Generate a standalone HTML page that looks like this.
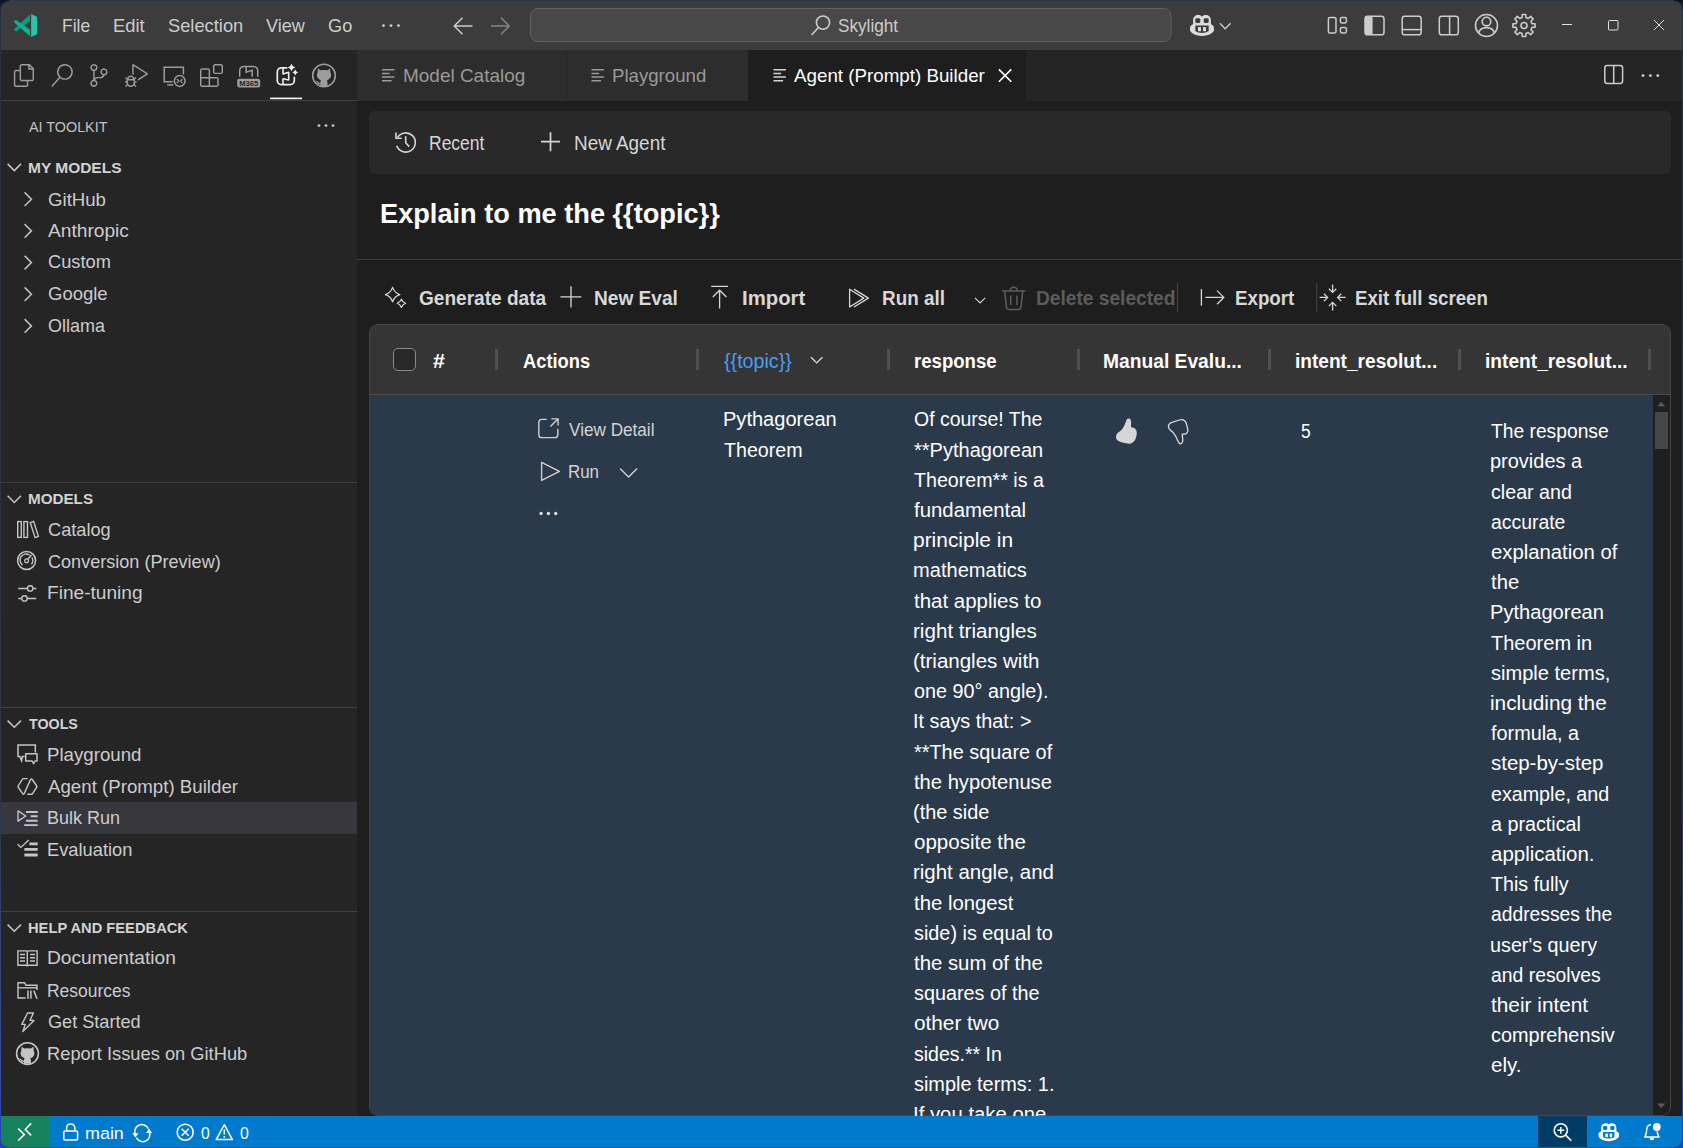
<!DOCTYPE html>
<html><head><meta charset="utf-8"><title>Agent (Prompt) Builder</title>
<style>
html,body{margin:0;padding:0;background:#1e1e1e;overflow:hidden}
body{width:1683px;height:1148px;position:relative;font-family:"Liberation Sans",sans-serif;}
#root{position:absolute;left:0;top:0;width:1683px;height:1148px;overflow:hidden}
.t{position:absolute;white-space:pre;transform-origin:0 0;font-family:"Liberation Sans",sans-serif}
svg{position:absolute;overflow:visible}
</style></head><body><div id="root">
<div style="position:absolute;left:0;top:0;width:1683px;height:1148px;background:linear-gradient(180deg,#0a1222 0px,#263040 12px,#2d3748 70%,#35509a 93%,#2440b4 100%)"></div>
<div style="position:absolute;left:9px;top:0;width:1665px;height:1px;background:#2b3644"></div>
<div style="position:absolute;left:9px;top:1147px;width:1665px;height:1px;background:#3c4b9a"></div>
<div style="position:absolute;left:1px;top:1px;width:1681px;height:49px;background:#3c3c3c;border-radius:8px 8px 0 0"></div>
<div style="position:absolute;left:1px;top:50px;width:356px;height:1066px;background:#252526;"></div>
<div style="position:absolute;left:1px;top:100px;width:356px;height:1px;background:#414141;"></div>
<div style="position:absolute;left:357px;top:50px;width:1325px;height:51px;background:#252526;"></div>
<div style="position:absolute;left:357px;top:50px;width:209px;height:51px;background:#2d2d2d;"></div>
<div style="position:absolute;left:567px;top:50px;width:181px;height:51px;background:#2d2d2d;"></div>
<div style="position:absolute;left:748px;top:50px;width:278px;height:51px;background:#1e1e1e;"></div>
<div style="position:absolute;left:357px;top:101px;width:1325px;height:1015px;background:#1e1e1e;"></div>
<div style="position:absolute;left:369px;top:111px;width:1302px;height:63px;background:#292929;border-radius:6px"></div>
<div style="position:absolute;left:357px;top:259px;width:1325px;height:1px;background:#3a3a3a;"></div>
<div style="position:absolute;left:369px;top:324px;width:1302px;height:791.5px;box-sizing:border-box;border:1px solid #454545;border-radius:9px;background:#353535;overflow:hidden"><div style="position:absolute;left:0;top:69px;width:1300px;height:1px;background:#4a4a4a"></div><div style="position:absolute;left:0;top:70px;width:1283px;height:740px;background:#2a3a4a"></div><div style="position:absolute;left:1283px;top:70px;width:17px;height:740px;background:#1f1f1f"></div><div style="position:absolute;left:1285px;top:87px;width:13px;height:37px;background:#474747"></div></div>
<div style="position:absolute;left:495.25px;top:349px;width:3px;height:21px;background:#505050;"></div>
<div style="position:absolute;left:696.25px;top:349px;width:3px;height:21px;background:#505050;"></div>
<div style="position:absolute;left:886.5px;top:349px;width:3px;height:21px;background:#505050;"></div>
<div style="position:absolute;left:1077px;top:349px;width:3px;height:21px;background:#505050;"></div>
<div style="position:absolute;left:1267.5px;top:349px;width:3px;height:21px;background:#505050;"></div>
<div style="position:absolute;left:1458px;top:349px;width:3px;height:21px;background:#505050;"></div>
<div style="position:absolute;left:1648.3px;top:349px;width:3px;height:21px;background:#505050;"></div>
<div style="position:absolute;left:393px;top:348px;width:21px;height:21px;border:1px solid #8a8a8a;border-radius:5px;background:#292929"></div>
<div style="position:absolute;left:1px;top:1116px;width:1681px;height:31px;background:#007acc;border-radius:0 0 8px 8px"></div>
<div style="position:absolute;left:1px;top:1116px;width:48px;height:31px;background:#16825d;border-radius:0 0 0 8px"></div>
<div style="position:absolute;left:1538px;top:1116px;width:49px;height:31px;background:#003c66;"></div>
<div style="position:absolute;left:1px;top:482px;width:356px;height:1px;background:#3f3f3f;"></div>
<div style="position:absolute;left:1px;top:707px;width:356px;height:1px;background:#3f3f3f;"></div>
<div style="position:absolute;left:1px;top:911px;width:356px;height:1px;background:#3f3f3f;"></div>
<div style="position:absolute;left:1px;top:802px;width:356px;height:32px;background:#37373d;"></div>
<svg style="left:0;top:0" width="1683" height="1148" viewBox="0 0 1683 1148"><path d="M30 14.6 L30 21.1 L16.6 31.3 L14.4 30.3 Q13.6 29.6 14.4 28.8 Z" fill="#009f7e"/><path d="M16 19.9 L30 29.7 L30 36.2 L14.3 22.4 Q13.6 21.6 14.4 20.8 Z" fill="#00b894"/><path d="M31.1 14.1 L36.4 16.5 Q37.2 16.9 37.2 17.8 V33.3 Q37.2 34.2 36.4 34.6 L31.1 37 Z" fill="#27c4a9"/></svg>
<svg style="left:0;top:0" width="1683" height="1148" viewBox="0 0 1683 1148"><circle cx="383.5" cy="25.6" r="1.45" fill="#cccccc"/><circle cx="391" cy="25.6" r="1.45" fill="#cccccc"/><circle cx="398.5" cy="25.6" r="1.45" fill="#cccccc"/><path d="M472.5 26 H454.5 M462.5 17.8 L454.3 26 L462.5 34.2" fill="none" stroke="#cccccc" stroke-width="1.5" /><path d="M491 26 H509 M501 17.8 L509.2 26 L501 34.2" fill="none" stroke="#858585" stroke-width="1.5" /><rect x="530.5" y="8.5" width="640.5" height="33" rx="7.5" fill="#484848" stroke="#626262" stroke-width="1"/><path d="M818.2 27.8 L811.6 35" fill="none" stroke="#cccccc" stroke-width="1.6" /><circle cx="823" cy="22.6" r="6.6" fill="none" stroke="#cccccc" stroke-width="1.6"/><g transform="translate(1190 15) scale(1.0)"><path d="M0 13 C0 11.2 1.3 10 3.1 9.3 V5.6 C3.1 2 5.2 0.1 8.4 0.1 C10 0.1 11.3 0.7 12 1.6 C12.7 0.7 14 0.1 15.6 0.1 C18.8 0.1 20.9 2 20.9 5.6 V9.3 C22.7 10 24 11.2 24 13 V15 C24 16.4 22.8 17.4 21.6 18.2 C19 19.9 15.4 21 12 21 C8.6 21 5 19.9 2.4 18.2 C1.2 17.4 0 16.4 0 15 Z" fill="#dcdcdc"/><rect x="5.3" y="3.2" width="5" height="4.7" rx="1.3" fill="#3c3c3c"/><rect x="13.7" y="3.2" width="5" height="4.7" rx="1.3" fill="#3c3c3c"/><path d="M5.3 10.4 H18.7 V16 C17 17.2 14.7 17.9 12 17.9 C9.3 17.9 7 17.2 5.3 16 Z" fill="#3c3c3c"/><rect x="8" y="12" width="3" height="4.3" rx="0.6" fill="#dcdcdc"/><rect x="13" y="12" width="3" height="4.3" rx="0.6" fill="#dcdcdc"/></g><path d="M1219.8 23.3 L1225.2 28.7 L1230.6 23.3" fill="none" stroke="#cccccc" stroke-width="1.4" /><rect x="1328.4" y="17.4" width="7.6" height="15.6" rx="1.6" fill="none" stroke="#cccccc" stroke-width="1.5"/><rect x="1340.4" y="17.4" width="6" height="5.6" rx="1.4" fill="none" stroke="#cccccc" stroke-width="1.5"/><rect x="1340.4" y="27.4" width="6" height="5.6" rx="1.4" fill="none" stroke="#cccccc" stroke-width="1.5"/><rect x="1365" y="16.2" width="19" height="18.6" rx="2.6" fill="none" stroke="#cccccc" stroke-width="1.5"/><path d="M1365 18.5 a2.3 2.3 0 0 1 2.3 -2.3 H1372.6 V34.8 H1367.3 a2.3 2.3 0 0 1 -2.3 -2.3 Z" fill="#cccccc"/><rect x="1402.2" y="16.2" width="19" height="18.6" rx="2.6" fill="none" stroke="#cccccc" stroke-width="1.5"/><path d="M1402.2 29.6 H1421.2" fill="none" stroke="#cccccc" stroke-width="1.5" /><rect x="1439.3" y="16.2" width="19" height="18.6" rx="2.6" fill="none" stroke="#cccccc" stroke-width="1.5"/><path d="M1449.6 16.2 V34.8" fill="none" stroke="#cccccc" stroke-width="1.5" /><circle cx="1486.5" cy="25.5" r="11" fill="none" stroke="#cccccc" stroke-width="1.6"/><circle cx="1486.5" cy="21.6" r="4.3" fill="none" stroke="#cccccc" stroke-width="1.6"/><path d="M1478.6 33 C1479.6 28.6 1483 27.6 1486.5 27.6 C1490 27.6 1493.4 28.6 1494.4 33" fill="none" stroke="#cccccc" stroke-width="1.6" /><path d="M1535.06 23.75 L1535.06 27.25 L1531.97 27.41 L1530.99 29.78 L1533.06 32.08 L1530.58 34.56 L1528.28 32.49 L1525.91 33.47 L1525.75 36.56 L1522.25 36.56 L1522.09 33.47 L1519.72 32.49 L1517.42 34.56 L1514.94 32.08 L1517.01 29.78 L1516.03 27.41 L1512.94 27.25 L1512.94 23.75 L1516.03 23.59 L1517.01 21.22 L1514.94 18.92 L1517.42 16.44 L1519.72 18.51 L1522.09 17.53 L1522.25 14.44 L1525.75 14.44 L1525.91 17.53 L1528.28 18.51 L1530.58 16.44 L1533.06 18.92 L1530.99 21.22 L1531.97 23.59 Z" fill="none" stroke="#cccccc" stroke-width="1.6" stroke-linejoin="round"/><circle cx="1524" cy="25.5" r="3.02" fill="none" stroke="#cccccc" stroke-width="1.6"/><path d="M1562 24.5 H1572" fill="none" stroke="#e0e0e0" stroke-width="1" /><rect x="1608.5" y="20.5" width="9.5" height="9.5" rx="1" fill="none" stroke="#e0e0e0" stroke-width="1"/><path d="M1654 20 L1664 30 M1664 20 L1654 30" fill="none" stroke="#e4e4e4" stroke-width="0.95" /><path d="M382 69.7 h12.4 M382 73.4 h7.6 M382 77.10000000000001 h12.4 M382 80.8 h9.6" fill="none" stroke="#9a9a9a" stroke-width="1.5" /><path d="M591.5 69.7 h12.4 M591.5 73.4 h7.6 M591.5 77.10000000000001 h12.4 M591.5 80.8 h9.6" fill="none" stroke="#9a9a9a" stroke-width="1.5" /><path d="M773.5 69.7 h12.4 M773.5 73.4 h7.6 M773.5 77.10000000000001 h12.4 M773.5 80.8 h9.6" fill="none" stroke="#d4d4d4" stroke-width="1.5" /><path d="M998.9 69.4 L1011.3 81.8 M1011.3 69.4 L998.9 81.8" fill="none" stroke="#ffffff" stroke-width="1.6" /><rect x="1604.8" y="65.5" width="17.8" height="18" rx="2.4" fill="none" stroke="#cccccc" stroke-width="1.5"/><path d="M1613.7 65.5 V83.5" fill="none" stroke="#cccccc" stroke-width="1.5" /><circle cx="1643" cy="75.6" r="1.45" fill="#cccccc"/><circle cx="1650.4" cy="75.6" r="1.45" fill="#cccccc"/><circle cx="1657.8" cy="75.6" r="1.45" fill="#cccccc"/></svg>
<svg style="left:0;top:0" width="1683" height="1148" viewBox="0 0 1683 1148"><g transform="translate(12.9 64) scale(0.9583333333333334)"><path d="M17.5 0h-9L7 1.5V6H2.5L1 7.5v15.07L2.5 24h12.07L16 22.57V18h4.7l1.3-1.43V4.5L17.5 0zm0 2.12l2.38 2.38H17.5V2.12zm-3 20.38h-12v-15H7v9.07L8.5 18h6v4.5zm6-6h-12v-15H16V6h4.5v10.5z" fill="#9d9d9d"/></g><g transform="translate(50.3 64) scale(0.9583333333333334)"><path d="M15.25 0a8.25 8.25 0 0 0-6.18 13.72L1 22.88l1.12 1 8.05-9.12A8.251 8.251 0 1 0 15.25.01V0zm0 15a6.75 6.75 0 1 1 0-13.5 6.75 6.75 0 0 1 0 13.5z" fill="#9d9d9d"/></g><g transform="translate(87.4 64) scale(0.9583333333333334)"><path d="M21.007 8.222A3.738 3.738 0 0 0 15.045 5.2a3.737 3.737 0 0 0 1.156 6.583 2.988 2.988 0 0 1-2.668 1.67h-2.99a4.456 4.456 0 0 0-2.989 1.165V7.4a3.737 3.737 0 1 0-1.494 0v9.117a3.776 3.776 0 1 0 1.816.099 2.99 2.99 0 0 1 2.668-1.667h2.99a4.484 4.484 0 0 0 4.223-3.039 3.736 3.736 0 0 0 3.25-3.687zM4.565 3.738a2.242 2.242 0 1 1 4.484 0 2.242 2.242 0 0 1-4.484 0zm4.484 16.441a2.242 2.242 0 1 1-4.484 0 2.242 2.242 0 0 1 4.484 0zm8.221-9.715a2.242 2.242 0 1 1 0-4.485 2.242 2.242 0 0 1 0 4.485z" fill="#9d9d9d"/></g><g transform="translate(125 64) scale(0.9583333333333334)"><path d="M10.94 13.5l-1.32 1.32a3.73 3.73 0 0 0-7.24 0L1.06 13.5 0 14.56l1.72 1.72-.22.22V18H0v1.5h1.5v.08c.077.489.214.966.41 1.42L0 22.94 1.06 24l1.65-1.65A4.308 4.308 0 0 0 6 24a4.31 4.31 0 0 0 3.29-1.65L10.94 24 12 22.94 10.09 21c.198-.464.336-.951.41-1.45v-.1H12V18h-1.5v-1.5l-.22-.22L12 14.56l-1.06-1.06zM6 13.5a2.25 2.25 0 0 1 2.25 2.25h-4.5A2.25 2.25 0 0 1 6 13.5zm3 6a3.33 3.33 0 0 1-3 3 3.33 3.33 0 0 1-3-3v-2.25h6v2.25zm14.76-9.9v1.26L13.5 17.37V15.6l8.5-5.37L9 2v9.46a5.07 5.07 0 0 0-1.5-.72V.63L8.64 0l15.12 9.6z" fill="#9d9d9d"/></g><g transform="translate(200 64) scale(0.9583333333333334)"><path d="M13.5 1.5L15 0h7.5L24 1.5V9l-1.5 1.5H15L13.5 9V1.5zm1.5 0V9h7.5V1.5H15zM0 15V6l1.5-1.5H9L10.5 6v7.5H18l1.5 1.5v7.5L18 24H1.5L0 22.5V15zm9-1.5V6H1.5v7.5H9zM9 15H1.5v7.5H9V15zm1.5 7.5H18V15h-7.5v7.5z" fill="#9d9d9d"/></g><path d="M172.6 81.8 H164.2 V67.2 H183.4 V74.6" fill="none" stroke="#9d9d9d" stroke-width="1.5" /><path d="M167.2 84.9 H173.4" fill="none" stroke="#9d9d9d" stroke-width="1.5" /><circle cx="179.7" cy="81" r="5.4" fill="none" stroke="#9d9d9d" stroke-width="1.5"/><path d="M176.9 79 L178.9 81 L176.9 83 M182.5 79 L180.5 81 L182.5 83" fill="none" stroke="#9d9d9d" stroke-width="1.1" /><path d="M239.7 76.8 V70.6 a4.2 4.2 0 0 1 4.2 -4.2 H253.5 a4.2 4.2 0 0 1 4.2 4.2 V76.8" fill="none" stroke="#9d9d9d" stroke-width="1.5" /><path d="M246.1 66.4 V72.2 L252.2 70.2 V76.8" fill="none" stroke="#9d9d9d" stroke-width="1.5" /><rect x="237.2" y="78.8" width="23" height="8.6" rx="2.2" fill="#9d9d9d"/><text x="248.7" y="86" font-family="Liberation Sans" font-weight="700" font-size="7.6" text-anchor="middle" fill="#252526" textLength="19" lengthAdjust="spacingAndGlyphs">M365</text><path d="M286.6 67.9 H281.4 a4.1 4.1 0 0 0 -4.1 4.1 V80.6 a4.1 4.1 0 0 0 4.1 4.1 H290.2 a4.1 4.1 0 0 0 4.1 -4.1 V77.3" fill="none" stroke="#ececec" stroke-width="1.75" stroke-linecap="round"/><path d="M283 67.9 V74 L288.7 72.3 V80 L283 78.7 V84.7" fill="none" stroke="#ececec" stroke-width="1.6" stroke-linejoin="round"/><path d="M291.5 63.7 Q292.336 66.664 295.3 67.5 Q292.336 68.336 291.5 71.3 Q290.664 68.336 287.7 67.5 Q290.664 66.664 291.5 63.7 Z" fill="#ececec"/><path d="M295.2 69.6 Q295.83799999999997 71.862 298.09999999999997 72.5 Q295.83799999999997 73.138 295.2 75.4 Q294.562 73.138 292.3 72.5 Q294.562 71.862 295.2 69.6 Z" fill="#ececec"/><rect x="270" y="97.6" width="32" height="1.6" fill="#ffffff"/><circle cx="324" cy="75.5" r="11.3" fill="none" stroke="#9d9d9d" stroke-width="1.6"/><path d="M317.80 68.50 L320.60 70.30 Q324.00 69.50 327.40 70.30 L330.20 68.50 L330.40 72.30 Q331.60 74.50 330.80 77.10 Q329.60 79.90 327.00 80.30 Q327.80 81.50 327.60 85.90 L320.40 85.90 L320.40 84.10 Q317.60 84.50 316.40 81.90 Q316.00 81.10 315.40 80.70 Q317.40 80.50 318.00 81.90 Q318.80 83.10 320.40 82.50 Q320.40 80.90 321.00 80.30 Q318.40 79.90 317.20 77.10 Q316.40 74.50 317.60 72.30 Z" fill="#9d9d9d"/><circle cx="319" cy="125.6" r="1.45" fill="#c5c5c5"/><circle cx="326" cy="125.6" r="1.45" fill="#c5c5c5"/><circle cx="333" cy="125.6" r="1.45" fill="#c5c5c5"/><path d="M7.6 163.9 l6.7 6.7 l6.7 -6.7" fill="none" stroke="#c5c5c5" stroke-width="1.5" /><path d="M7.6 495.8 l6.7 6.7 l6.7 -6.7" fill="none" stroke="#c5c5c5" stroke-width="1.5" /><path d="M7.6 720.6 l6.7 6.7 l6.7 -6.7" fill="none" stroke="#c5c5c5" stroke-width="1.5" /><path d="M7.6 924.6 l6.7 6.7 l6.7 -6.7" fill="none" stroke="#c5c5c5" stroke-width="1.5" /><path d="M24.6 192.4 l6.8 6.8 l-6.8 6.8" fill="none" stroke="#c5c5c5" stroke-width="1.5" /><path d="M24.6 224.1 l6.8 6.8 l-6.8 6.8" fill="none" stroke="#c5c5c5" stroke-width="1.5" /><path d="M24.6 255.8 l6.8 6.8 l-6.8 6.8" fill="none" stroke="#c5c5c5" stroke-width="1.5" /><path d="M24.6 287.4 l6.8 6.8 l-6.8 6.8" fill="none" stroke="#c5c5c5" stroke-width="1.5" /><path d="M24.6 319.1 l6.8 6.8 l-6.8 6.8" fill="none" stroke="#c5c5c5" stroke-width="1.5" /><rect x="17.7" y="521.6" width="3.6" height="15.8" fill="none" stroke="#c5c5c5" stroke-width="1.4"/><rect x="23.9" y="521.6" width="3.6" height="15.8" fill="none" stroke="#c5c5c5" stroke-width="1.4"/><path d="M30.3 522.6 L33.6 521.4 L38.4 536.4 L35.1 537.6 Z" fill="none" stroke="#c5c5c5" stroke-width="1.4"/><circle cx="26.6" cy="560.5" r="9" fill="none" stroke="#c5c5c5" stroke-width="1.5"/><path d="M22.6 565 A6 6 0 0 1 29.6 555.2 M32 557.6 A6 6 0 0 1 31.4 564.3" fill="none" stroke="#c5c5c5" stroke-width="1.4" /><circle cx="26.6" cy="560.7" r="1.9" fill="none" stroke="#c5c5c5" stroke-width="1.3"/><path d="M27.8 559.3 L31.6 555" fill="none" stroke="#c5c5c5" stroke-width="1.4" /><path d="M18.3 588.4 H27.4 M33 588.4 H36.3 M18.3 598.4 H21.7 M27.3 598.4 H36.3" fill="none" stroke="#c5c5c5" stroke-width="1.5" /><circle cx="30.2" cy="588.4" r="2.7" fill="none" stroke="#c5c5c5" stroke-width="1.4"/><circle cx="24.5" cy="598.4" r="2.7" fill="none" stroke="#c5c5c5" stroke-width="1.4"/><path d="M24.6 756.4 H22.4 L21.6 760.6 L19.8 756.4 H18 V745.1 H35.3 V752.6" fill="none" stroke="#c5c5c5" stroke-width="1.5" /><path d="M25.7 753.7 H37 V761 H35 L33.6 763.6 L32.2 761 H25.7 Z" fill="none" stroke="#c5c5c5" stroke-width="1.5" stroke-linejoin="round"/><path d="M27.1 778.6 H23.4 Q22.7 778.6 22.3 779.3 L18.1 786 Q17.8 786.5 18.1 787 L22.6 793.6 Q23.6 794.9 24.3 793.4 L30.5 779.6 Q31.3 778.2 32.2 779.5 L36.8 786 Q37.1 786.5 36.8 787 L32.6 793.6 Q32.2 794.3 31.5 794.3 H27.9" fill="none" stroke="#c5c5c5" stroke-width="1.4" stroke-linecap="round" stroke-linejoin="round"/><path d="M18 810.9 L25.8 816 L18 821.2 Z" fill="none" stroke="#c5c5c5" stroke-width="1.4" stroke-linejoin="round"/><path d="M26 812 H37.7 M30.6 816.3 H37.7 M26 820.7 H37.7 M24.2 825.1 H37.7" fill="none" stroke="#c5c5c5" stroke-width="1.9" /><path d="M17.6 844.2 L20.8 847.4 L28.8 840" fill="none" stroke="#c5c5c5" stroke-width="1.4" /><path d="M29.4 843.8 H37.7 M24.4 849.4 H37.7 M24.4 855 H37.7" fill="none" stroke="#c5c5c5" stroke-width="2.8" /><path d="M27.3 951.6 V966 M17.9 950.9 H26 Q27.3 950.9 27.3 952 Q27.3 950.9 28.6 950.9 H37.1 V965.2 H28.6 Q27.3 965.2 27.3 966.4 Q27.3 965.2 26 965.2 H17.9 Z" fill="none" stroke="#c5c5c5" stroke-width="1.4" /><path d="M20 954.6 H25 M20 957.8 H25 M20 961 H25 M30 954.6 H35 M30 957.8 H35 M30 961 H35" fill="none" stroke="#c5c5c5" stroke-width="1.5" /><path d="M25.6 998 H18 V982.7 H24.6 L26 985.3 H37 V990" fill="none" stroke="#c5c5c5" stroke-width="1.4" /><path d="M18 987.8 H37" fill="none" stroke="#c5c5c5" stroke-width="1.4" /><path d="M28 990.4 V998.7 M30.9 990.4 V998.7 M33.8 990.6 L37 998.7" fill="none" stroke="#c5c5c5" stroke-width="1.5" /><path d="M27.6 1013 H33.4 L30 1020.4 H34 L22.8 1031.6 L25.2 1024.4 H21.8 Z" fill="none" stroke="#c5c5c5" stroke-width="1.4" stroke-linejoin="round"/><circle cx="27.5" cy="1053.6" r="10.9" fill="none" stroke="#c5c5c5" stroke-width="1.6"/><path d="M21.52 1046.85 L24.22 1048.58 Q27.50 1047.81 30.78 1048.58 L33.48 1046.85 L33.67 1050.51 Q34.83 1052.64 34.06 1055.14 Q32.90 1057.84 30.39 1058.23 Q31.17 1059.39 30.97 1063.63 L24.03 1063.63 L24.03 1061.90 Q21.33 1062.28 20.17 1059.77 Q19.78 1059.00 19.20 1058.62 Q21.13 1058.42 21.71 1059.77 Q22.48 1060.93 24.03 1060.35 Q24.03 1058.81 24.61 1058.23 Q22.10 1057.84 20.94 1055.14 Q20.17 1052.64 21.33 1050.51 Z" fill="#c5c5c5"/></svg>
<svg style="left:0;top:0" width="1683" height="1148" viewBox="0 0 1683 1148"><path d="M397.56 137.41 A9.6 9.6 0 1 1 396.68 145.78" fill="none" stroke="#d6d6d6" stroke-width="1.6" /><path d="M396 132.6 V138.2 H401.6" fill="none" stroke="#d6d6d6" stroke-width="1.6" /><path d="M405.7 136.2 V142.8 L409.2 146.6" fill="none" stroke="#d6d6d6" stroke-width="1.6" /><path d="M541 141.7 H560 M550.5 132.2 V151.2" fill="none" stroke="#d6d6d6" stroke-width="1.7" /><path d="M392.6 287.40000000000003 Q394.40000000000003 292.8 399.8 294.6 Q394.40000000000003 296.40000000000003 392.6 301.8 Q390.8 296.40000000000003 385.40000000000003 294.6 Q390.8 292.8 392.6 287.40000000000003 Z" fill="none" stroke="#d6d6d6" stroke-width="1.3" stroke-linejoin="round"/><path d="M401.4 299.1 Q402.45 302.25 405.59999999999997 303.3 Q402.45 304.35 401.4 307.5 Q400.34999999999997 304.35 397.2 303.3 Q400.34999999999997 302.25 401.4 299.1 Z" fill="none" stroke="#d6d6d6" stroke-width="1.2" stroke-linejoin="round"/><path d="M560.4 296.8 H581.4 M571 286.2 V307.4" fill="none" stroke="#d6d6d6" stroke-width="1.3" /><path d="M711.2 286.4 H728 M719.6 308.6 V290.4 M712.8 297 L719.6 290.2 L726.4 297" fill="none" stroke="#d6d6d6" stroke-width="1.3" /><path d="M849.6 289.2 L863.8 298.1 L849.6 307 Z" fill="none" stroke="#d6d6d6" stroke-width="1.3" stroke-linejoin="round"/><path d="M854.4 289.4 L868.4 298.1 L854.4 306.8" fill="none" stroke="#d6d6d6" stroke-width="1.3" stroke-linejoin="round" stroke-linecap="round"/><path d="M975 297.9 L980.1 303 L985.2 297.9" fill="none" stroke="#d6d6d6" stroke-width="1.2" /><path d="M1002 291 H1025.4 M1010 291 a3.7 3.7 0 0 1 7.4 0" fill="none" stroke="#5e5e5e" stroke-width="1.5" /><path d="M1004.6 291 L1006.4 307 a2.6 2.6 0 0 0 2.6 2.4 H1018.4 a2.6 2.6 0 0 0 2.6 -2.4 L1022.8 291" fill="none" stroke="#5e5e5e" stroke-width="1.5" /><path d="M1010.7 295.6 V305 M1016.9 295.6 V305" fill="none" stroke="#5e5e5e" stroke-width="1.5" /><rect x="1177" y="283" width="1" height="29" fill="#454545"/><rect x="1316.2" y="283" width="1" height="29" fill="#454545"/><path d="M1201.4 289 V305.8 M1205.4 297.4 H1223.6 M1217 290.6 L1223.8 297.4 L1217 304.2" fill="none" stroke="#d6d6d6" stroke-width="1.3" /><path d="M1332.6 284.4 V292.4 M1328.8999999999999 288.7 L1332.6 292.4 L1336.3 288.7 M1332.6 310.4 V302.4 M1328.8999999999999 306.1 L1332.6 302.4 L1336.3 306.1 M1319.6 297.4 H1327.6 M1323.9 293.7 L1327.6 297.4 L1323.9 301.09999999999997 M1345.6 297.4 H1337.6 M1341.3 293.7 L1337.6 297.4 L1341.3 301.09999999999997" fill="none" stroke="#d6d6d6" stroke-width="1.3" /><path d="M811 357.2 L816.7 362.9 L822.4 357.2" fill="none" stroke="#e0e0e0" stroke-width="1.3" /><path d="M546.8 419.4 H542 a3.2 3.2 0 0 0 -3.2 3.2 V434.4 a3.2 3.2 0 0 0 3.2 3.2 H554.6 a3.2 3.2 0 0 0 3.2 -3.2 V428.8" fill="none" stroke="#d0d0d0" stroke-width="1.4" /><path d="M550.4 426.6 L558 419 M551.4 418.9 H558.1 V425.6" fill="none" stroke="#d0d0d0" stroke-width="1.4" /><path d="M541.6 462.4 L559.4 471.4 L541.6 480.4 Z" fill="none" stroke="#d0d0d0" stroke-width="1.4" stroke-linejoin="round"/><path d="M620.1 468.4 L628.6 476.9 L637.1 468.4" fill="none" stroke="#d0d0d0" stroke-width="1.4" /><circle cx="541.1" cy="513.5" r="1.7" fill="#dcdcdc"/><circle cx="548.4" cy="513.5" r="1.7" fill="#dcdcdc"/><circle cx="555.7" cy="513.5" r="1.7" fill="#dcdcdc"/><path d="M1128.5 418.6 C1130.6 418.4 1131.3 420.6 1131.1 423 L1131 427.1 C1133.2 427.6 1135.2 428.2 1136 429.8 C1137 431.6 1136.9 434 1136.4 436 C1135.9 438.4 1135.4 439.4 1134.6 440.6 C1133.4 442.6 1131.2 444 1128.8 443.8 C1125.4 443.2 1121.4 442.3 1118.4 441 C1116.2 439.8 1115.6 437.4 1116.2 435.4 C1116.8 433.6 1118.2 432.6 1119.6 431.6 C1121.4 430.4 1122.8 428.6 1123.8 426.6 C1124.8 424.6 1125.6 422.4 1126.4 420.2 C1126.8 419.2 1127.5 418.7 1128.5 418.6 Z" fill="#d6d6d6"/><path d="M1172.6 422.2 L1179.2 420 C1182.6 419 1185.4 420.6 1186.4 423.8 L1187.8 429.4 C1188.4 432.2 1186.6 434.2 1184 434.2 H1182.2 L1182.8 440 C1182.8 442.6 1181.4 444 1180.4 443.8 C1179.2 443.6 1178.6 442.6 1178 441.2 C1176.8 438.2 1175.6 435.4 1173.4 432.8 C1172.4 431.6 1171 430.8 1170 429.8 C1168.4 428.2 1168.2 425.8 1169.2 424.2 C1169.9 423.2 1171.2 422.6 1172.6 422.2 Z" fill="none" stroke="#dddddd" stroke-width="1.3" stroke-linejoin="round"/><path d="M1657.2 406.2 L1661.2 401.8 L1665.2 406.2 Z" fill="#5a5a5a"/><path d="M1657.2 1103.6 L1661.2 1108 L1665.2 1103.6 Z" fill="#5a5a5a"/></svg>
<span class="t" style="left:61.55px;top:14.62px;font-size:18.4px;line-height:22px;color:#cccccc;font-weight:400;transform:scaleX(0.9505);">File</span>
<span class="t" style="left:112.75px;top:14.62px;font-size:18.4px;line-height:22px;color:#cccccc;font-weight:400;transform:scaleX(0.9974);">Edit</span>
<span class="t" style="left:167.50px;top:14.62px;font-size:18.4px;line-height:22px;color:#cccccc;font-weight:400;transform:scaleX(0.9943);">Selection</span>
<span class="t" style="left:265.50px;top:14.62px;font-size:18.4px;line-height:22px;color:#cccccc;font-weight:400;transform:scaleX(0.9814);">View</span>
<span class="t" style="left:328.00px;top:14.62px;font-size:18.4px;line-height:22px;color:#cccccc;font-weight:400;transform:scaleX(0.9875);">Go</span>
<span class="t" style="left:838.00px;top:14.62px;font-size:18.4px;line-height:22px;color:#cccccc;font-weight:400;transform:scaleX(0.9333);">Skylight</span>
<span class="t" style="left:402.97px;top:65.12px;font-size:18.4px;line-height:22px;color:#9a9a9a;font-weight:400;transform:scaleX(1.0310);">Model Catalog</span>
<span class="t" style="left:612.49px;top:65.12px;font-size:18.4px;line-height:22px;color:#9a9a9a;font-weight:400;transform:scaleX(1.0129);">Playground</span>
<span class="t" style="left:794.30px;top:65.12px;font-size:18.4px;line-height:22px;color:#ffffff;font-weight:400;transform:scaleX(1.0202);">Agent (Prompt) Builder</span>
<span class="t" style="left:29.00px;top:117.77px;font-size:15.1px;line-height:18px;color:#c2c2c2;font-weight:400;transform:scaleX(0.9511);">AI TOOLKIT</span>
<span class="t" style="left:28.49px;top:158.66px;font-size:15.4px;line-height:18px;color:#d2d2d2;font-weight:700;transform:scaleX(1.0061);">MY MODELS</span>
<span class="t" style="left:48.00px;top:188.62px;font-size:18.4px;line-height:22px;color:#cccccc;font-weight:400;transform:scaleX(1.0130);">GitHub</span>
<span class="t" style="left:48.00px;top:220.12px;font-size:18.4px;line-height:22px;color:#cccccc;font-weight:400;transform:scaleX(1.0420);">Anthropic</span>
<span class="t" style="left:48.00px;top:251.37px;font-size:18.4px;line-height:22px;color:#cccccc;font-weight:400;transform:scaleX(0.9914);">Custom</span>
<span class="t" style="left:48.00px;top:282.92px;font-size:18.4px;line-height:22px;color:#cccccc;font-weight:400;transform:scaleX(1.0055);">Google</span>
<span class="t" style="left:48.00px;top:314.92px;font-size:18.4px;line-height:22px;color:#cccccc;font-weight:400;transform:scaleX(0.9776);">Ollama</span>
<span class="t" style="left:28.41px;top:490.06px;font-size:15.4px;line-height:18px;color:#d2d2d2;font-weight:700;transform:scaleX(0.9880);">MODELS</span>
<span class="t" style="left:48.00px;top:519.02px;font-size:18.4px;line-height:22px;color:#cccccc;font-weight:400;transform:scaleX(0.9895);">Catalog</span>
<span class="t" style="left:48.00px;top:550.92px;font-size:18.4px;line-height:22px;color:#cccccc;font-weight:400;transform:scaleX(0.9825);">Conversion (Preview)</span>
<span class="t" style="left:46.96px;top:582.42px;font-size:18.4px;line-height:22px;color:#cccccc;font-weight:400;transform:scaleX(1.0388);">Fine-tuning</span>
<span class="t" style="left:29.40px;top:715.06px;font-size:15.4px;line-height:18px;color:#d2d2d2;font-weight:700;transform:scaleX(0.9263);">TOOLS</span>
<span class="t" style="left:46.98px;top:744.12px;font-size:18.4px;line-height:22px;color:#cccccc;font-weight:400;transform:scaleX(1.0151);">Playground</span>
<span class="t" style="left:48.00px;top:775.92px;font-size:18.4px;line-height:22px;color:#cccccc;font-weight:400;transform:scaleX(1.0159);">Agent (Prompt) Builder</span>
<span class="t" style="left:47.02px;top:807.42px;font-size:18.4px;line-height:22px;color:#cccccc;font-weight:400;transform:scaleX(0.9783);">Bulk Run</span>
<span class="t" style="left:47.01px;top:839.02px;font-size:18.4px;line-height:22px;color:#cccccc;font-weight:400;transform:scaleX(0.9946);">Evaluation</span>
<span class="t" style="left:28.35px;top:919.26px;font-size:15.4px;line-height:18px;color:#d2d2d2;font-weight:700;transform:scaleX(0.9544);">HELP AND FEEDBACK</span>
<span class="t" style="left:46.96px;top:947.42px;font-size:18.4px;line-height:22px;color:#cccccc;font-weight:400;transform:scaleX(1.0411);">Documentation</span>
<span class="t" style="left:47.05px;top:979.62px;font-size:18.4px;line-height:22px;color:#cccccc;font-weight:400;transform:scaleX(0.9492);">Resources</span>
<span class="t" style="left:48.00px;top:1011.22px;font-size:18.4px;line-height:22px;color:#cccccc;font-weight:400;transform:scaleX(0.9849);">Get Started</span>
<span class="t" style="left:47.01px;top:1042.92px;font-size:18.4px;line-height:22px;color:#cccccc;font-weight:400;transform:scaleX(0.9943);">Report Issues on GitHub</span>
<span class="t" style="left:84.76px;top:1122.54px;font-size:17.2px;line-height:21px;color:#ffffff;font-weight:400;transform:scaleX(1.0422);">main</span>
<span class="t" style="left:200.80px;top:1122.54px;font-size:17.2px;line-height:21px;color:#ffffff;font-weight:400;transform:scaleX(0.9111);">0</span>
<span class="t" style="left:240.00px;top:1122.54px;font-size:17.2px;line-height:21px;color:#ffffff;font-weight:400;transform:scaleX(0.9222);">0</span>
<span class="t" style="left:428.61px;top:130.51px;font-size:19.6px;line-height:24px;color:#d6d6d6;font-weight:400;transform:scaleX(0.8923);">Recent</span>
<span class="t" style="left:573.54px;top:130.51px;font-size:19.6px;line-height:24px;color:#d6d6d6;font-weight:400;transform:scaleX(0.9644);">New Agent</span>
<span class="t" style="left:379.79px;top:196.16px;font-size:28.4px;line-height:34px;color:#ffffff;font-weight:700;transform:scaleX(0.9572);">Explain to me the {{topic}}</span>
<span class="t" style="left:418.75px;top:286.21px;font-size:19.6px;line-height:24px;color:#d8d8d8;font-weight:700;transform:scaleX(0.9732);">Generate data</span>
<span class="t" style="left:594.27px;top:286.21px;font-size:19.6px;line-height:24px;color:#d8d8d8;font-weight:700;transform:scaleX(0.9752);">New Eval</span>
<span class="t" style="left:742.21px;top:286.21px;font-size:19.6px;line-height:24px;color:#d8d8d8;font-weight:700;transform:scaleX(1.0384);">Import</span>
<span class="t" style="left:881.54px;top:286.21px;font-size:19.6px;line-height:24px;color:#d8d8d8;font-weight:700;transform:scaleX(0.9629);">Run all</span>
<span class="t" style="left:1036.32px;top:286.21px;font-size:19.6px;line-height:24px;color:#5c5c5c;font-weight:700;transform:scaleX(0.9772);">Delete selected</span>
<span class="t" style="left:1235.24px;top:286.21px;font-size:19.6px;line-height:24px;color:#d8d8d8;font-weight:700;transform:scaleX(0.9557);">Export</span>
<span class="t" style="left:1355.05px;top:286.21px;font-size:19.6px;line-height:24px;color:#d8d8d8;font-weight:700;transform:scaleX(0.9533);">Exit full screen</span>
<span class="t" style="left:433.00px;top:348.71px;font-size:19.6px;line-height:24px;color:#ffffff;font-weight:700;transform:scaleX(1.0909);">#</span>
<span class="t" style="left:522.75px;top:348.71px;font-size:19.6px;line-height:24px;color:#ffffff;font-weight:700;transform:scaleX(0.9346);">Actions</span>
<span class="t" style="left:724.25px;top:348.71px;font-size:19.6px;line-height:24px;color:#479ef5;font-weight:400;transform:scaleX(1.0034);">{{topic}}</span>
<span class="t" style="left:913.55px;top:348.71px;font-size:19.6px;line-height:24px;color:#ffffff;font-weight:700;transform:scaleX(0.9481);">response</span>
<span class="t" style="left:1103.32px;top:348.71px;font-size:19.6px;line-height:24px;color:#ffffff;font-weight:700;transform:scaleX(0.9814);">Manual Evalu...</span>
<span class="t" style="left:1295.03px;top:348.71px;font-size:19.6px;line-height:24px;color:#ffffff;font-weight:700;transform:scaleX(0.9748);">intent_resolut...</span>
<span class="t" style="left:1484.82px;top:348.71px;font-size:19.6px;line-height:24px;color:#ffffff;font-weight:700;transform:scaleX(0.9776);">intent_resolut...</span>
<span class="t" style="left:569.25px;top:418.94px;font-size:18.2px;line-height:22px;color:#d4d4d4;font-weight:400;transform:scaleX(0.9430);">View Detail</span>
<span class="t" style="left:568.32px;top:461.44px;font-size:18.2px;line-height:22px;color:#d4d4d4;font-weight:400;transform:scaleX(0.9280);">Run</span>
<span class="t" style="left:722.73px;top:407.46px;font-size:19.6px;line-height:24px;color:#ffffff;font-weight:400;transform:scaleX(1.0232);">Pythagorean</span>
<span class="t" style="left:723.75px;top:438.41px;font-size:19.6px;line-height:24px;color:#ffffff;font-weight:400;transform:scaleX(1.0022);">Theorem</span>
<span class="t" style="left:1301.25px;top:418.71px;font-size:19.6px;line-height:24px;color:#ffffff;font-weight:400;transform:scaleX(0.8864);">5</span>
<span class="t" style="left:913.75px;top:407.46px;font-size:19.6px;line-height:24px;color:#ffffff;font-weight:400;transform:scaleX(0.9927);">Of course! The</span>
<span class="t" style="left:913.75px;top:437.66px;font-size:19.6px;line-height:24px;color:#ffffff;font-weight:400;transform:scaleX(1.0222);">**Pythagorean</span>
<span class="t" style="left:913.75px;top:467.86px;font-size:19.6px;line-height:24px;color:#ffffff;font-weight:400;transform:scaleX(1.0024);">Theorem** is a</span>
<span class="t" style="left:913.75px;top:498.06px;font-size:19.6px;line-height:24px;color:#ffffff;font-weight:400;transform:scaleX(1.0396);">fundamental</span>
<span class="t" style="left:912.68px;top:528.26px;font-size:19.6px;line-height:24px;color:#ffffff;font-weight:400;transform:scaleX(1.0679);">principle in</span>
<span class="t" style="left:912.73px;top:558.46px;font-size:19.6px;line-height:24px;color:#ffffff;font-weight:400;transform:scaleX(1.0248);">mathematics</span>
<span class="t" style="left:913.75px;top:588.66px;font-size:19.6px;line-height:24px;color:#ffffff;font-weight:400;transform:scaleX(1.0442);">that applies to</span>
<span class="t" style="left:912.70px;top:618.86px;font-size:19.6px;line-height:24px;color:#ffffff;font-weight:400;transform:scaleX(1.0529);">right triangles</span>
<span class="t" style="left:912.70px;top:649.06px;font-size:19.6px;line-height:24px;color:#ffffff;font-weight:400;transform:scaleX(1.0464);">(triangles with</span>
<span class="t" style="left:913.75px;top:679.26px;font-size:19.6px;line-height:24px;color:#ffffff;font-weight:400;transform:scaleX(1.0101);">one 90° angle).</span>
<span class="t" style="left:912.74px;top:709.46px;font-size:19.6px;line-height:24px;color:#ffffff;font-weight:400;transform:scaleX(1.0118);">It says that: &gt;</span>
<span class="t" style="left:913.75px;top:739.66px;font-size:19.6px;line-height:24px;color:#ffffff;font-weight:400;transform:scaleX(1.0149);">**The square of</span>
<span class="t" style="left:913.75px;top:769.86px;font-size:19.6px;line-height:24px;color:#ffffff;font-weight:400;transform:scaleX(1.0291);">the hypotenuse</span>
<span class="t" style="left:912.73px;top:800.06px;font-size:19.6px;line-height:24px;color:#ffffff;font-weight:400;transform:scaleX(1.0168);">(the side</span>
<span class="t" style="left:913.75px;top:830.26px;font-size:19.6px;line-height:24px;color:#ffffff;font-weight:400;transform:scaleX(1.0481);">opposite the</span>
<span class="t" style="left:912.71px;top:860.46px;font-size:19.6px;line-height:24px;color:#ffffff;font-weight:400;transform:scaleX(1.0437);">right angle, and</span>
<span class="t" style="left:913.75px;top:890.66px;font-size:19.6px;line-height:24px;color:#ffffff;font-weight:400;transform:scaleX(1.0371);">the longest</span>
<span class="t" style="left:913.75px;top:920.86px;font-size:19.6px;line-height:24px;color:#ffffff;font-weight:400;transform:scaleX(1.0121);">side) is equal to</span>
<span class="t" style="left:913.75px;top:951.06px;font-size:19.6px;line-height:24px;color:#ffffff;font-weight:400;transform:scaleX(1.0381);">the sum of the</span>
<span class="t" style="left:913.75px;top:981.26px;font-size:19.6px;line-height:24px;color:#ffffff;font-weight:400;transform:scaleX(1.0098);">squares of the</span>
<span class="t" style="left:913.75px;top:1011.46px;font-size:19.6px;line-height:24px;color:#ffffff;font-weight:400;transform:scaleX(1.0595);">other two</span>
<span class="t" style="left:913.75px;top:1041.66px;font-size:19.6px;line-height:24px;color:#ffffff;font-weight:400;transform:scaleX(0.9963);">sides.** In</span>
<span class="t" style="left:913.75px;top:1071.86px;font-size:19.6px;line-height:24px;color:#ffffff;font-weight:400;transform:scaleX(1.0158);">simple terms: 1.</span>
<span class="t" style="left:912.71px;top:1102.06px;font-size:19.6px;line-height:24px;color:#ffffff;font-weight:400;transform:scaleX(1.0381);">If you take one</span>
<span class="t" style="left:1491.00px;top:419.21px;font-size:19.6px;line-height:24px;color:#ffffff;font-weight:400;transform:scaleX(0.9820);">The response</span>
<span class="t" style="left:1489.98px;top:449.41px;font-size:19.6px;line-height:24px;color:#ffffff;font-weight:400;transform:scaleX(1.0195);">provides a</span>
<span class="t" style="left:1491.00px;top:479.61px;font-size:19.6px;line-height:24px;color:#ffffff;font-weight:400;transform:scaleX(1.0037);">clear and</span>
<span class="t" style="left:1491.00px;top:509.81px;font-size:19.6px;line-height:24px;color:#ffffff;font-weight:400;transform:scaleX(0.9900);">accurate</span>
<span class="t" style="left:1491.00px;top:540.01px;font-size:19.6px;line-height:24px;color:#ffffff;font-weight:400;transform:scaleX(1.0362);">explanation of</span>
<span class="t" style="left:1491.00px;top:570.21px;font-size:19.6px;line-height:24px;color:#ffffff;font-weight:400;transform:scaleX(1.0333);">the</span>
<span class="t" style="left:1489.97px;top:600.41px;font-size:19.6px;line-height:24px;color:#ffffff;font-weight:400;transform:scaleX(1.0255);">Pythagorean</span>
<span class="t" style="left:1491.00px;top:630.61px;font-size:19.6px;line-height:24px;color:#ffffff;font-weight:400;transform:scaleX(1.0209);">Theorem in</span>
<span class="t" style="left:1491.00px;top:660.81px;font-size:19.6px;line-height:24px;color:#ffffff;font-weight:400;transform:scaleX(1.0235);">simple terms,</span>
<span class="t" style="left:1489.94px;top:691.01px;font-size:19.6px;line-height:24px;color:#ffffff;font-weight:400;transform:scaleX(1.0607);">including the</span>
<span class="t" style="left:1491.00px;top:721.21px;font-size:19.6px;line-height:24px;color:#ffffff;font-weight:400;transform:scaleX(1.0118);">formula, a</span>
<span class="t" style="left:1491.00px;top:751.41px;font-size:19.6px;line-height:24px;color:#ffffff;font-weight:400;transform:scaleX(1.0425);">step-by-step</span>
<span class="t" style="left:1491.00px;top:781.61px;font-size:19.6px;line-height:24px;color:#ffffff;font-weight:400;transform:scaleX(1.0044);">example, and</span>
<span class="t" style="left:1491.00px;top:811.81px;font-size:19.6px;line-height:24px;color:#ffffff;font-weight:400;transform:scaleX(1.0062);">a practical</span>
<span class="t" style="left:1491.00px;top:842.01px;font-size:19.6px;line-height:24px;color:#ffffff;font-weight:400;transform:scaleX(1.0442);">application.</span>
<span class="t" style="left:1491.00px;top:872.21px;font-size:19.6px;line-height:24px;color:#ffffff;font-weight:400;transform:scaleX(1.0031);">This fully</span>
<span class="t" style="left:1491.00px;top:902.41px;font-size:19.6px;line-height:24px;color:#ffffff;font-weight:400;transform:scaleX(0.9843);">addresses the</span>
<span class="t" style="left:1489.99px;top:932.61px;font-size:19.6px;line-height:24px;color:#ffffff;font-weight:400;transform:scaleX(1.0089);">user&#x27;s query</span>
<span class="t" style="left:1491.00px;top:962.81px;font-size:19.6px;line-height:24px;color:#ffffff;font-weight:400;transform:scaleX(0.9883);">and resolves</span>
<span class="t" style="left:1491.00px;top:993.01px;font-size:19.6px;line-height:24px;color:#ffffff;font-weight:400;transform:scaleX(1.0619);">their intent</span>
<span class="t" style="left:1491.00px;top:1023.21px;font-size:19.6px;line-height:24px;color:#ffffff;font-weight:400;transform:scaleX(1.0149);">comprehensiv</span>
<span class="t" style="left:1491.00px;top:1053.41px;font-size:19.6px;line-height:24px;color:#ffffff;font-weight:400;transform:scaleX(1.0510);">ely.</span>
<div style="position:absolute;left:357px;top:1116px;width:1181px;height:31px;background:#007acc"></div>
<svg style="left:0;top:0" width="1683" height="1148" viewBox="0 0 1683 1148"><path d="M18.2 1128.6 L24.4 1134.6 L18.2 1140.6 M31.2 1123.4 L25.2 1129.4 L31.2 1135.4" fill="none" stroke="#ffffff" stroke-width="1.5" /><rect x="63.8" y="1131" width="13.8" height="9" rx="1.2" fill="none" stroke="#ffffff" stroke-width="1.5"/><path d="M66.6 1131 V1128 a4.1 4.1 0 0 1 8.2 0 V1131" fill="none" stroke="#ffffff" stroke-width="1.5" /><path d="M135.4 1134.6 A7 7 0 0 1 148.2 1128.6 M149.2 1131.6 A7 7 0 0 1 136.4 1137.6" fill="none" stroke="#ffffff" stroke-width="1.5" /><path d="M132.4 1133.2 H138.6 L135.5 1137.6 Z" fill="#ffffff"/><path d="M146 1133 H152.2 L149.1 1128.6 Z" fill="#ffffff"/><circle cx="185.2" cy="1132.2" r="8" fill="none" stroke="#ffffff" stroke-width="1.5"/><path d="M181.7 1128.7 L188.7 1135.7 M188.7 1128.7 L181.7 1135.7" fill="none" stroke="#ffffff" stroke-width="1.5" /><path d="M224.3 1124.6 L232.4 1139.6 H216.2 Z" fill="none" stroke="#ffffff" stroke-width="1.5" stroke-linejoin="round"/><path d="M224.3 1129.6 V1134.6 M224.3 1136 V1137.8" fill="none" stroke="#ffffff" stroke-width="1.5" /><circle cx="1560.8" cy="1130.3" r="6.6" fill="none" stroke="#ffffff" stroke-width="1.6"/><path d="M1565.6 1135.2 L1571.2 1140.6" fill="none" stroke="#ffffff" stroke-width="1.7" /><path d="M1557.4 1130.3 H1564.2 M1560.8 1126.9 V1133.7" fill="none" stroke="#ffffff" stroke-width="1.5" /><g transform="translate(1598.5 1123.2) scale(0.855)"><path d="M0 13 C0 11.2 1.3 10 3.1 9.3 V5.6 C3.1 2 5.2 0.1 8.4 0.1 C10 0.1 11.3 0.7 12 1.6 C12.7 0.7 14 0.1 15.6 0.1 C18.8 0.1 20.9 2 20.9 5.6 V9.3 C22.7 10 24 11.2 24 13 V15 C24 16.4 22.8 17.4 21.6 18.2 C19 19.9 15.4 21 12 21 C8.6 21 5 19.9 2.4 18.2 C1.2 17.4 0 16.4 0 15 Z" fill="#ffffff"/><rect x="5.3" y="3.2" width="5" height="4.7" rx="1.3" fill="#007acc"/><rect x="13.7" y="3.2" width="5" height="4.7" rx="1.3" fill="#007acc"/><path d="M5.3 10.4 H18.7 V16 C17 17.2 14.7 17.9 12 17.9 C9.3 17.9 7 17.2 5.3 16 Z" fill="#007acc"/><rect x="8" y="12" width="3" height="4.3" rx="0.6" fill="#ffffff"/><rect x="13" y="12" width="3" height="4.3" rx="0.6" fill="#ffffff"/></g><path d="M1651 1124.4 C1647.4 1124.8 1646.6 1128 1646.6 1130.6 C1646.6 1133.8 1645.8 1135.4 1644.8 1137 H1659 C1658 1135.4 1657.2 1133.8 1657.2 1131.6" fill="none" stroke="#ffffff" stroke-width="1.5" stroke-linejoin="round"/><path d="M1649.6 1138 a2.3 2.3 0 0 0 4.6 0 Z" fill="#ffffff"/><circle cx="1656.8" cy="1127" r="3.9" fill="#ffffff"/></svg>
</div></body></html>
